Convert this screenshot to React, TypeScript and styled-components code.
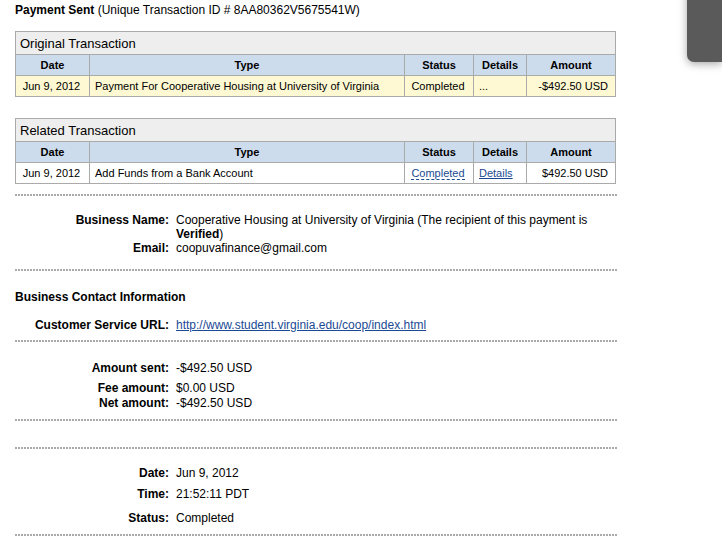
import React from "react";
import styled, { createGlobalStyle } from "styled-components";

const Global = createGlobalStyle`
  html, body { margin: 0; padding: 0; background: #fff; }
  body { font-family: "Liberation Sans", Arial, Helvetica, sans-serif; color: #000; }
`;

const Page = styled.div`
  position: relative;
  width: 722px;
  height: 546px;
  overflow: hidden;
  padding: 3px 0 0 15px;
  box-sizing: border-box;
`;

const Column = styled.div`
  width: 601px;
  display: flex;
  flex-direction: column;
`;

const Title = styled.div`
  font-size: 12px;
  line-height: 14px;
  b { font-weight: bold; }
`;

const Table = styled.table<{ $mt: number }>`
  margin-top: ${(p) => p.$mt}px;
  width: 600px;
  border-collapse: collapse;
  table-layout: fixed;
  font-size: 11px;
`;

const Caption = styled.th`
  background: #eeeeee;
  border: 1px solid #aaa;
  height: 22px;
  padding: 0 4px;
  text-align: left;
  font-weight: normal;
  font-size: 13px;
`;

const Head = styled.th`
  background: #cddced;
  border: 1px solid #aaa;
  height: 20px;
  padding: 0 5px;
  text-align: center;
  font-weight: bold;
  font-size: 11px;
`;

const Cell = styled.td<{ $align?: string; $hl?: boolean }>`
  background: ${(p) => (p.$hl ? "#fef9d2" : "#fff")};
  border: 1px solid #aaa;
  height: 20px;
  padding: 0 7px 0 5px;
  text-align: ${(p) => p.$align || "left"};
  white-space: nowrap;
`;

const Link = styled.a`
  color: #1a4a94;
  text-decoration: underline;
`;

const DashLink = styled.a`
  color: #1a4a94;
  text-decoration: none;
  border-bottom: 1px dashed #1a4a94;
`;

const Divider = styled.div<{ $mt: number }>`
  margin-top: ${(p) => p.$mt}px;
  height: 2px;
  width: 602px;
  background-image: linear-gradient(to right, #aaaaaa 2px, transparent 2px);
  background-size: 3px 2px;
  background-repeat: repeat-x;
`;

const Pairs = styled.div<{ $mt: number }>`
  margin-top: ${(p) => p.$mt}px;
  display: grid;
  grid-template-columns: 154px 440px;
  column-gap: 7px;
  font-size: 12px;
  line-height: 14px;
`;

const Label = styled.div<{ $mt?: number }>`
  text-align: right;
  font-weight: bold;
  margin-top: ${(p) => p.$mt || 0}px;
`;

const Value = styled.div<{ $mt?: number }>`
  margin-top: ${(p) => p.$mt || 0}px;
  b { font-weight: bold; }
`;

const SectionTitle = styled.div<{ $mt: number }>`
  margin-top: ${(p) => p.$mt}px;
  font-size: 12px;
  line-height: 14px;
  font-weight: bold;
`;

const SideTab = styled.div`
  position: absolute;
  top: -10px;
  right: 0;
  width: 35px;
  height: 72px;
  background: #5a5a5a;
  border-bottom-left-radius: 7px;
  box-shadow: 0 2px 8px rgba(0, 0, 0, 0.35);
`;

const cols = [74, 315, 69, 53, 89];

function Colgroup() {
  return (
    <colgroup>
      {cols.map((w, i) => (
        <col key={i} style={{ width: w }} />
      ))}
    </colgroup>
  );
}

function HeaderRow() {
  return (
    <tr>
      <Head>Date</Head>
      <Head>Type</Head>
      <Head>Status</Head>
      <Head>Details</Head>
      <Head>Amount</Head>
    </tr>
  );
}

export default function App() {
  return (
    <Page>
      <Global />
      <Column>
        <Title>
          <b>Payment Sent</b> (Unique Transaction ID # 8AA80362V5675541W)
        </Title>

        <Table $mt={14}>
          <Colgroup />
          <thead>
            <tr>
              <Caption colSpan={5}>Original Transaction</Caption>
            </tr>
            <HeaderRow />
          </thead>
          <tbody>
            <tr>
              <Cell $hl $align="center">Jun 9, 2012</Cell>
              <Cell $hl>Payment For Cooperative Housing at University of Virginia</Cell>
              <Cell $hl $align="center">Completed</Cell>
              <Cell $hl>...</Cell>
              <Cell $hl $align="right">-$492.50 USD</Cell>
            </tr>
          </tbody>
        </Table>

        <Table $mt={21}>
          <Colgroup />
          <thead>
            <tr>
              <Caption colSpan={5}>Related Transaction</Caption>
            </tr>
            <HeaderRow />
          </thead>
          <tbody>
            <tr>
              <Cell $align="center">Jun 9, 2012</Cell>
              <Cell>Add Funds from a Bank Account</Cell>
              <Cell $align="center">
                <DashLink href="#">Completed</DashLink>
              </Cell>
              <Cell>
                <Link href="#">Details</Link>
              </Cell>
              <Cell $align="right">$492.50 USD</Cell>
            </tr>
          </tbody>
        </Table>

        <Divider $mt={10} />

        <Pairs $mt={17}>
          <Label>Business Name:</Label>
          <Value>
            Cooperative Housing at University of Virginia (The recipient of this payment is{" "}
            <b>Verified</b>)
          </Value>
          <Label>Email:</Label>
          <Value>coopuvafinance@gmail.com</Value>
        </Pairs>

        <Divider $mt={14} />

        <SectionTitle $mt={19}>Business Contact Information</SectionTitle>

        <Pairs $mt={14}>
          <Label>Customer Service URL:</Label>
          <Value>
            <Link href="#">http://www.student.virginia.edu/coop/index.html</Link>
          </Value>
        </Pairs>

        <Divider $mt={8} />

        <Pairs $mt={19}>
          <Label>Amount sent:</Label>
          <Value>-$492.50 USD</Value>
          <Label $mt={6}>Fee amount:</Label>
          <Value $mt={6}>$0.00 USD</Value>
          <Label $mt={1}>Net amount:</Label>
          <Value $mt={1}>-$492.50 USD</Value>
        </Pairs>

        <Divider $mt={9} />
        <Divider $mt={26} />

        <Pairs $mt={17}>
          <Label>Date:</Label>
          <Value>Jun 9, 2012</Value>
          <Label $mt={7}>Time:</Label>
          <Value $mt={7}>21:52:11 PDT</Value>
          <Label $mt={10}>Status:</Label>
          <Value $mt={10}>Completed</Value>
        </Pairs>

        <Divider $mt={9} />
      </Column>
      <SideTab />
    </Page>
  );
}
